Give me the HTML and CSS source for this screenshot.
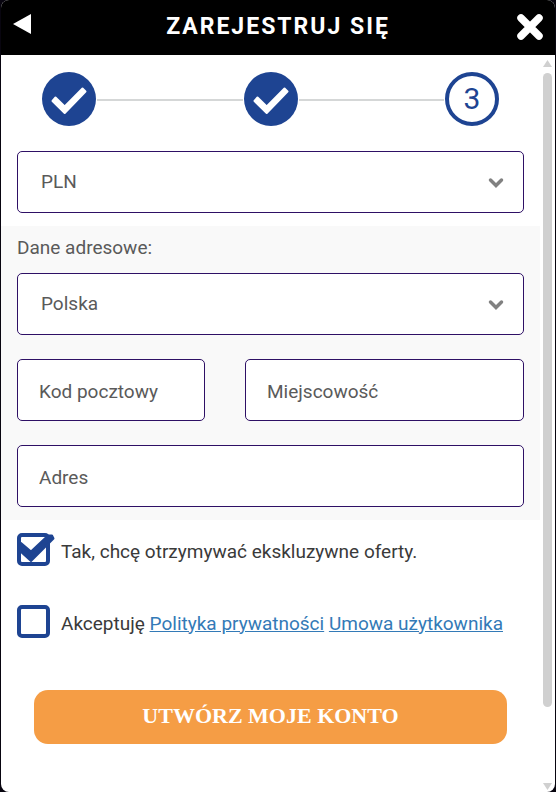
FILE: index.html
```html
<!DOCTYPE html>
<html lang="pl">
<head>
<meta charset="utf-8">
<meta name="viewport" content="width=device-width, initial-scale=1">
<title>Zarejestruj się</title>
<link rel="stylesheet" href="styles.css">
</head>
<body>
<main class="panel">
  <header class="header">
    <button class="icon-button" type="button" aria-label="Wstecz">
      <svg width="18" height="20" viewBox="0 0 18 20"><path d="M0 10 18 0v20z" fill="#fff"/></svg>
    </button>
    <h1 class="title">ZAREJESTRUJ SIĘ</h1>
    <button class="icon-button icon-button-close" type="button" aria-label="Zamknij">
      <svg width="26" height="26" viewBox="0 0 26 26"><path d="M4 4 22 22M22 4 4 22" stroke="#fff" stroke-width="7.500" stroke-linecap="round"/></svg>
    </button>
  </header>
  <div class="content">
    <form class="form">
      <ol class="steps">
        <li class="step step-done" aria-label="Krok 1">
          <svg width="54" height="54" viewBox="0 0 54 54"><path d="M13.500 25.500 22.700 34.500 40.500 16.500 43.500 19.500 22.700 41 10.500 29z" fill="#fff" stroke="#fff" stroke-width="2" stroke-linejoin="round"/></svg>
        </li>
        <li class="line" role="presentation"></li>
        <li class="step step-done" aria-label="Krok 2">
          <svg width="54" height="54" viewBox="0 0 54 54"><path d="M13.500 25.500 22.700 34.500 40.500 16.500 43.500 19.500 22.700 41 10.500 29z" fill="#fff" stroke="#fff" stroke-width="2" stroke-linejoin="round"/></svg>
        </li>
        <li class="line" role="presentation"></li>
        <li class="step">3</li>
      </ol>
      <div class="group">
        <div class="select-wrap">
          <select class="field field-select" aria-label="Waluta"><option>PLN</option></select>
          <svg class="chevron" width="16" height="12" viewBox="0 0 16 12"><path d="M2.500 3 8 8.500 13.500 3" fill="none" stroke="#818181" stroke-width="3.500" stroke-linecap="round"/></svg>
        </div>
      </div>
      <fieldset class="group address">
        <label class="address-label" for="country">Dane adresowe:</label>
        <div class="select-wrap">
          <select class="field field-select" id="country"><option>Polska</option></select>
          <svg class="chevron" width="16" height="12" viewBox="0 0 16 12"><path d="M2.500 3 8 8.500 13.500 3" fill="none" stroke="#818181" stroke-width="3.500" stroke-linecap="round"/></svg>
        </div>
        <div class="row">
          <input class="field" type="text" placeholder="Kod pocztowy" aria-label="Kod pocztowy">
          <input class="field" type="text" placeholder="Miejscowość" aria-label="Miejscowość">
        </div>
        <input class="field" type="text" placeholder="Adres" aria-label="Adres">
      </fieldset>
      <div class="checks">
        <div class="check">
          <span class="box-wrap">
            <input class="box" type="checkbox" id="offers" checked>
            <svg class="tick" width="38" height="33" viewBox="0 0 38 33"><path d="M4 10 14 18.500 31 2.500 35 2.500 36.500 5.500 14 28 3 18z" fill="#1e4492" stroke="#1e4492" stroke-width="2" stroke-linejoin="round"/></svg>
          </span>
          <label for="offers">Tak, chcę otrzymywać ekskluzywne oferty.</label>
        </div>
        <div class="check">
          <span class="box-wrap">
            <input class="box" type="checkbox" id="terms">
            <svg class="tick" width="38" height="33" viewBox="0 0 38 33"><path d="M4 10 14 18.500 31 2.500 35 2.500 36.500 5.500 14 28 3 18z" fill="#1e4492" stroke="#1e4492" stroke-width="2" stroke-linejoin="round"/></svg>
          </span>
          <label for="terms">Akceptuję <a href="#privacy">Polityka prywatności</a> <a href="#agreement">Umowa użytkownika</a></label>
        </div>
      </div>
      <button class="submit" type="submit">UTWÓRZ MOJE KONTO</button>
    </form>
    <div class="scrollbar" aria-hidden="true">
      <svg width="9" height="7" viewBox="0 0 9 7"><path d="M4.500 0 9 7H0z" fill="#d0d0d0"/></svg>
      <div class="track"><div class="thumb"></div></div>
      <svg width="9" height="7" viewBox="0 0 9 7"><path d="M0 0h9L4.500 7z" fill="#d0d0d0"/></svg>
    </div>
  </div>
</main>
</body>
</html>
```
FILE: styles.css
```css
* {
  box-sizing: border-box;
}

body {
  margin: 0;
  background: #08050f;
  color: #3a3a3a;
  font: 19px/24px Roboto, sans-serif;
}

.panel {
  display: flex;
  flex-direction: column;
  min-height: 100vh;
  margin: 0 1px;
  overflow: hidden;
  border-radius: 8px;
  background: #fff;
}

.header {
  display: flex;
  justify-content: space-between;
  align-items: flex-start;
  height: 55px;
  padding: 14px 12px 0;
  background: #000;
}

.icon-button {
  display: flex;
  width: 26px;
  padding: 0;
  border: 0;
  background: none;
}

.title {
  margin: 0;
  color: #fff;
  font-size: 23px;
  line-height: 26px;
  font-weight: 700;
  letter-spacing: 2px;
}

.content {
  display: flex;
  flex: 1;
}

.form {
  flex: 1;
  min-width: 0;
}

.steps {
  display: flex;
  align-items: center;
  margin: 0;
  padding: 17px 41px 25px;
  list-style: none;
}

.step {
  display: flex;
  align-items: center;
  justify-content: center;
  flex: none;
  width: 54px;
  height: 54px;
  border: 4px solid #1e4492;
  border-radius: 50%;
  color: #1e4492;
  font-size: 30px;
}

.step-done {
  border: 0;
  background: #1e4492;
}

.line {
  flex: 1;
  height: 2px;
  margin: 2px 1px 0;
  background: #d5d7d7;
}

.group {
  padding: 0 16px;
}

.address {
  display: flex;
  flex-direction: column;
  gap: 24px;
  min-width: 0;
  margin: 13px 0;
  padding-top: 10px;
  padding-bottom: 13px;
  border: 0;
  background: #f9f9f9;
}

.address-label {
  margin-bottom: -11px;
  color: #5a5a5a;
}

.select-wrap {
  position: relative;
}

.field {
  display: block;
  width: 100%;
  height: 62px;
  margin: 0;
  padding: 3px 21px 0;
  border: 1px solid #2e1065;
  border-radius: 5px;
  background: #fff;
  color: #5a5a5a;
  font: inherit;
}

.field::placeholder {
  color: #5a5a5a;
  opacity: 1;
}

.field-select {
  padding: 0 23px;
  appearance: none;
}

.chevron {
  position: absolute;
  top: 26px;
  right: 20px;
  pointer-events: none;
}

.row {
  display: grid;
  grid-template-columns: 188fr 279fr;
  gap: 40px;
}

.checks {
  display: flex;
  flex-direction: column;
  gap: 39px;
  padding: 0 16px;
}

.check {
  display: flex;
  align-items: center;
  gap: 11px;
}

.check label {
  padding-top: 4px;
}

.box-wrap {
  position: relative;
  flex: none;
  height: 33px;
}

.box {
  display: block;
  width: 33px;
  height: 33px;
  margin: 0;
  border: 4px solid #1e4492;
  border-radius: 5px;
  background: #fff;
  appearance: none;
}

.tick {
  position: absolute;
  top: 0;
  left: 0;
  display: none;
  pointer-events: none;
}

.box:checked + .tick {
  display: block;
}

a {
  color: #337ab7;
  text-decoration: underline;
}

.submit {
  display: block;
  width: calc(100% - 66px);
  height: 54px;
  margin: 52px 33px 47px;
  padding: 0 0 2px;
  border: 0;
  border-radius: 14px;
  background: #f59d45;
  color: #fff;
  font: bold 22px/26px "Liberation Serif", serif;
}

.scrollbar {
  display: flex;
  flex-direction: column;
  align-items: center;
  gap: 6px;
  width: 15px;
  padding: 5px 0 2px;
}

.track {
  flex: 1;
  width: 9px;
}

.thumb {
  height: 90%;
  border-radius: 5px;
  background: #d0d0d0;
}
```
